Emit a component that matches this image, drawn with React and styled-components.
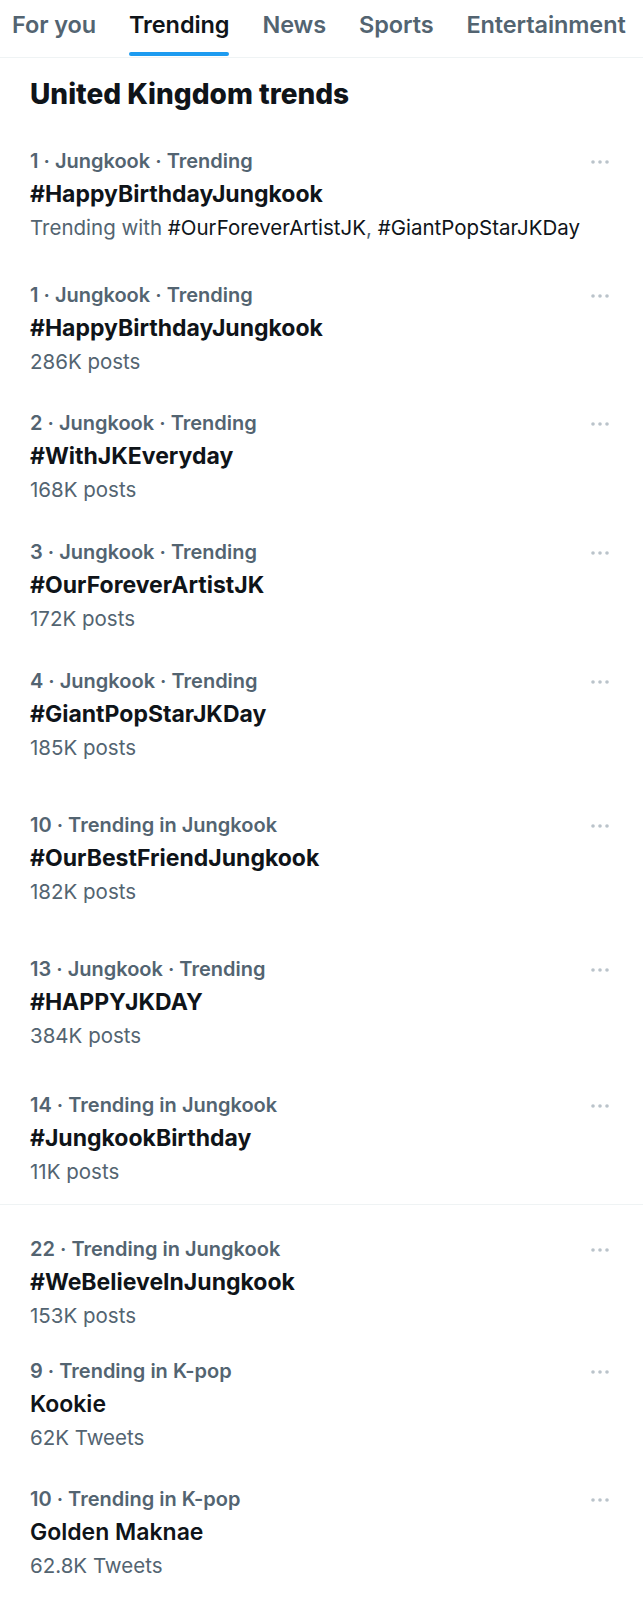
import React from "react";
import styled, { createGlobalStyle } from "styled-components";

const GlobalStyle = createGlobalStyle`
  body {
    margin: 0;
    background: #ffffff;
    font-family: Inter, "Noto Sans", "Liberation Sans", sans-serif;
    color: #0f1419;
  }
`;

const Page = styled.div`
  width: 643px;
  min-height: 1600px;
  background: #ffffff;
`;

const TabBar = styled.nav`
  display: flex;
  align-items: stretch;
  gap: 33px;
  height: 58px;
  padding-left: 12px;
  border-bottom: 1px solid #eff3f4;
  box-sizing: border-box;
`;

const Tab = styled.div`
  display: flex;
  flex-direction: column;
  justify-content: space-between;
  align-items: center;
  padding-top: 10px;
  font-size: 23.5px;
  font-weight: 600;
  letter-spacing: -0.1px;
  color: ${(p) => (p.$active ? "#0f1419" : "#536471")};
`;

const Indicator = styled.div`
  width: 100%;
  height: 4px;
  border-radius: 2px;
  margin-bottom: 1px;
  background: ${(p) => (p.$show ? "#1d9bf0" : "transparent")};
`;

const Heading = styled.h2`
  margin: 0;
  padding: 20px 30px 0;
  font-size: 28px;
  font-weight: 800;
  line-height: 33px;
  color: #0f1419;
`;

const Trend = styled.div`
  display: flex;
  justify-content: space-between;
  padding: 0 33px 0 30px;
  margin-top: ${(p) => p.$gap}px;
`;

const TrendBody = styled.div`
  display: flex;
  flex-direction: column;
`;

const Meta = styled.div`
  font-size: 20px;
  font-weight: 600;
  line-height: 33px;
  color: #536471;
`;

const Title = styled.div`
  font-size: 23px;
  font-weight: ${(p) => (p.$plain ? 600 : 700)};
  line-height: 33px;
  color: #0f1419;
`;

const Sub = styled.div`
  font-size: 20.5px;
  font-weight: 400;
  line-height: 33px;
  color: #536471;
`;

const Tag = styled.span`
  color: #0f1419;
`;

const More = styled.button`
  display: flex;
  align-items: center;
  height: 33px;
  padding: 0;
  border: 0;
  background: none;
  color: #bac3ca;
`;

const Divider = styled.hr`
  margin: 16px 0 0;
  border: 0;
  border-top: 1px solid #eff3f4;
`;

const Dots = () => (
  <svg width="20" height="6" viewBox="0 0 20 6">
    <circle cx="3" cy="3" r="1.8" fill="currentColor" />
    <circle cx="10" cy="3" r="1.8" fill="currentColor" />
    <circle cx="17" cy="3" r="1.8" fill="currentColor" />
  </svg>
);

const tabs = ["For you", "Trending", "News", "Sports", "Entertainment"];

const trends = [
  {
    gap: 34,
    meta: "1 · Jungkook · Trending",
    title: "#HappyBirthdayJungkook",
    with: ["#OurForeverArtistJK", "#GiantPopStarJKDay"],
  },
  { gap: 35, meta: "1 · Jungkook · Trending", title: "#HappyBirthdayJungkook", sub: "286K posts" },
  { gap: 29, meta: "2 · Jungkook · Trending", title: "#WithJKEveryday", sub: "168K posts" },
  { gap: 30, meta: "3 · Jungkook · Trending", title: "#OurForeverArtistJK", sub: "172K posts" },
  { gap: 30, meta: "4 · Jungkook · Trending", title: "#GiantPopStarJKDay", sub: "185K posts" },
  { gap: 45, meta: "10 · Trending in Jungkook", title: "#OurBestFriendJungkook", sub: "182K posts" },
  { gap: 45, meta: "13 · Jungkook · Trending", title: "#HAPPYJKDAY", sub: "384K posts" },
  { gap: 37, meta: "14 · Trending in Jungkook", title: "#JungkookBirthday", sub: "11K posts", divider: true },
  { gap: 28, meta: "22 · Trending in Jungkook", title: "#WeBelieveInJungkook", sub: "153K posts" },
  { gap: 23, meta: "9 · Trending in K-pop", title: "Kookie", sub: "62K Tweets", plain: true },
  { gap: 29, meta: "10 · Trending in K-pop", title: "Golden Maknae", sub: "62.8K Tweets", plain: true },
];

export default function App() {
  return (
    <Page>
      <GlobalStyle />
      <TabBar>
        {tabs.map((t) => (
          <Tab key={t} $active={t === "Trending"}>
            <span>{t}</span>
            <Indicator $show={t === "Trending"} />
          </Tab>
        ))}
      </TabBar>
      <Heading>United Kingdom trends</Heading>
      {trends.map((t, i) => (
        <React.Fragment key={i}>
          <Trend $gap={t.gap}>
            <TrendBody>
              <Meta>{t.meta}</Meta>
              <Title $plain={t.plain}>{t.title}</Title>
              {t.with ? (
                <Sub>
                  Trending with <Tag>{t.with[0]}</Tag>, <Tag>{t.with[1]}</Tag>
                </Sub>
              ) : (
                <Sub>{t.sub}</Sub>
              )}
            </TrendBody>
            <More aria-label="More">
              <Dots />
            </More>
          </Trend>
          {t.divider && <Divider />}
        </React.Fragment>
      ))}
    </Page>
  );
}
